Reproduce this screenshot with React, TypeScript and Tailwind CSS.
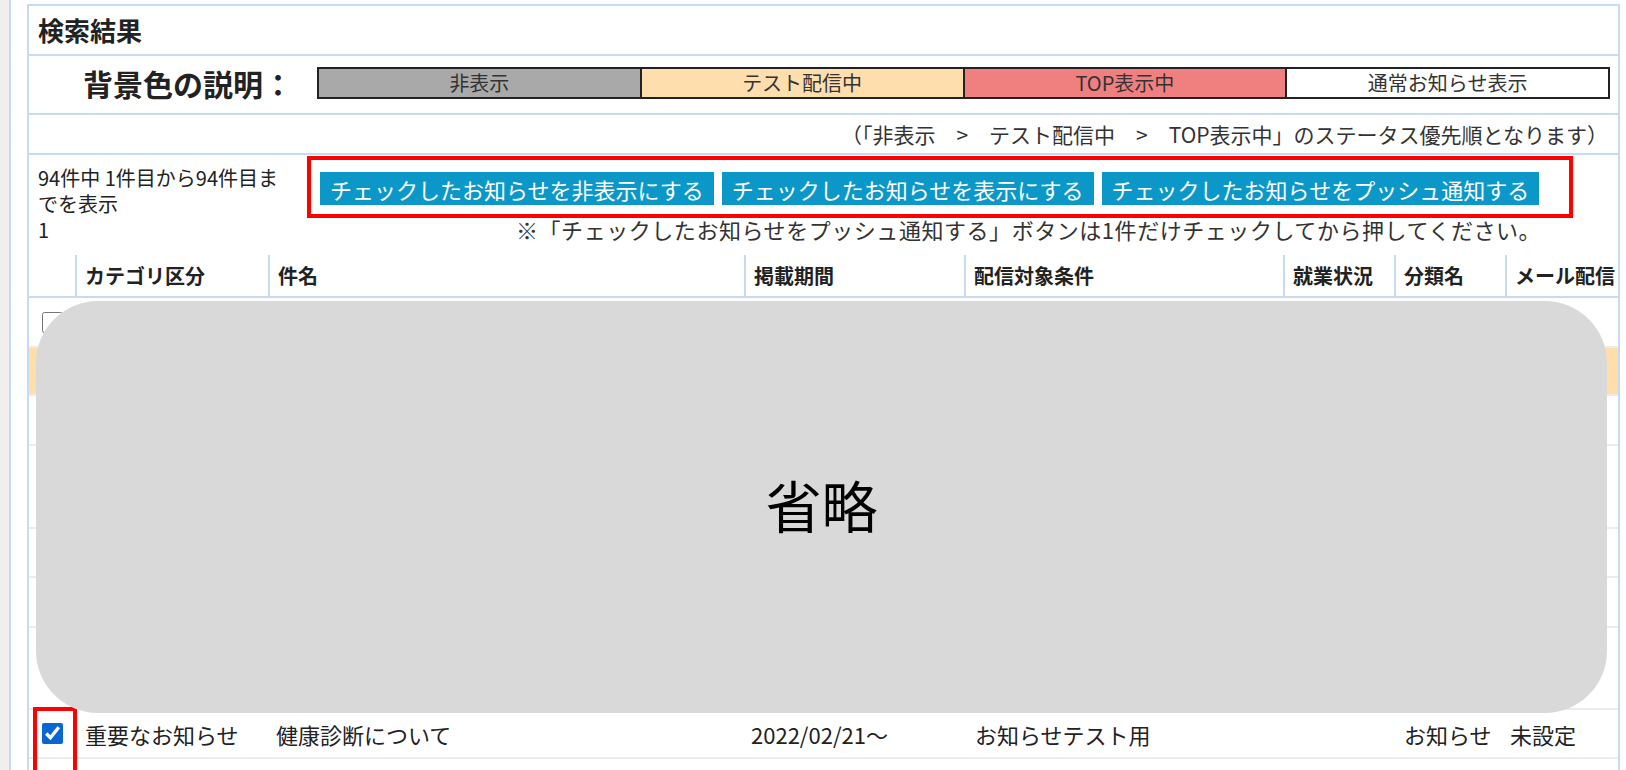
const cols = [
  'grid-cols-[46px_193px_476px_220px_319px_111px_111px_113px]',
]

const headers = ['', 'カテゴリ区分', '件名', '掲載期間', '配信対象条件', '就業状況', '分類名', 'メール配信']

const bodyPad = ['pl-[13px]', 'pl-[10px]', 'pl-[8px]', 'pl-[7px]', 'pl-[11px]', 'pl-[9px]', 'pl-[10px]', 'pl-[5px]']

type Row = {
  h: string
  bg?: string
  checked?: boolean
  cells: string[]
}

const rows: Row[] = [
  { h: 'h-[50px]', cells: ['重要なお知らせ', '年末年始の休業について', '2022/12/01〜', 'お知らせテスト用', '', 'お知らせ', '未設定'] },
  { h: 'h-[48px]', bg: 'bg-[#ffdeac]', cells: ['一般', 'テスト配信のお知らせ', '2022/11/15〜', '全員', '', 'お知らせ', '未設定'] },
  { h: 'h-[50px]', cells: ['一般', 'システムメンテナンスについて', '2022/10/01〜', '全員', '', 'お知らせ', '未設定'] },
  { h: 'h-[83px]', cells: ['重要なお知らせ', '給与明細の配信について', '2022/08/01〜', 'お知らせテスト用', '', 'お知らせ', '未設定'] },
  { h: 'h-[49px]', cells: ['一般', 'アンケートのお願い', '2022/06/10〜', '全員', '', 'お知らせ', '未設定'] },
  { h: 'h-[50px]', cells: ['一般', '新サービス開始のご案内', '2022/04/01〜', '全員', '', 'お知らせ', '未設定'] },
  { h: 'h-[82px]', cells: ['重要なお知らせ', '個人情報の取り扱いについて', '2022/03/01〜', 'お知らせテスト用', '', 'お知らせ', '未設定'] },
  { h: 'h-[49px]', checked: true, cells: ['重要なお知らせ', '健康診断について', '2022/02/21〜', 'お知らせテスト用', '', 'お知らせ', '未設定'] },
]

function LegendCell({ label, bg, last }: { label: string; bg: string; last?: boolean }) {
  return (
    <div className={`flex-1 flex items-center justify-center ${bg} ${last ? '' : 'border-r-2 border-[#222]'}`}>
      {label}
    </div>
  )
}

export default function App() {
  return (
    <div className="relative flex h-[770px] overflow-hidden bg-white text-[#222] font-['Noto_Sans_CJK_JP',sans-serif]">
      <div className="w-[11px] shrink-0 bg-[#f1efeb] border-r-2 border-[#c6dbf3]" />
      <div className="flex-1 pl-[16px] pr-[6px] pt-[4px]">
        <div className="border-2 border-b-0 border-[#c6dbf3] h-[780px]">
          {/* title */}
          <div className="h-[50px] border-b-2 border-[#c6dbf3] flex items-center pl-[9px] text-[26px] font-bold leading-none">
            検索結果
          </div>

          {/* legend */}
          <div className="h-[59px] border-b-2 border-[#c6dbf3] flex items-center pb-[4px] pl-[54px]">
            <div className="text-[30px] font-bold leading-none w-[234px]">背景色の説明：</div>
            <div className="flex h-[32px] w-[1293px] border-2 border-[#222] text-[20px] leading-none text-[#333]">
              <LegendCell label="非表示" bg="bg-[#a9a9a9]" />
              <LegendCell label="テスト配信中" bg="bg-[#ffdead]" />
              <LegendCell label="TOP表示中" bg="bg-[#f08080]" />
              <LegendCell label="通常お知らせ表示" bg="bg-white" last />
            </div>
          </div>

          {/* priority note */}
          <div className="h-[40px] border-b-2 border-[#c6dbf3] flex items-center justify-end pr-[10px] text-[21px] leading-none text-[#333]">
            （「非表示　&gt;　テスト配信中　&gt;　TOP表示中」のステータス優先順となります）
          </div>

          {/* info + actions */}
          <div className="h-[100px] flex">
            <div className="w-[278px] shrink-0 pl-[9px] pr-[20px] pt-[10px] text-[20px] leading-[26px]">
              94件中 1件目から94件目までを表示
              <br />1
            </div>
            <div className="flex flex-col">
              <div className="mt-[1px] border-4 border-[#ff0000] pl-[9px] pt-[12px] pb-[9px] pr-[30px] flex gap-[8px]">
                {['チェックしたお知らせを非表示にする', 'チェックしたお知らせを表示にする', 'チェックしたお知らせをプッシュ通知する'].map((b) => (
                  <button key={b} className="h-[33px] px-[10px] bg-[#0b98c9] text-white text-[22px] leading-none">
                    {b}
                  </button>
                ))}
              </div>
              <div className="ml-[209px] text-[22px] leading-[22px] tracking-[0.55px] text-[#333]">
                ※「チェックしたお知らせをプッシュ通知する」ボタンは1件だけチェックしてから押してください。
              </div>
            </div>
          </div>

          {/* table header */}
          <div className={`grid ${cols[0]} h-[43px] border-b-2 border-[#c6dbf3] text-[20px] font-bold leading-none`}>
            {headers.map((h, i) => (
              <div key={i} className={`flex items-center pl-[8px] ${i > 0 ? 'border-l-2 border-[#c6dbf3]' : ''}`}>
                {h}
              </div>
            ))}
          </div>

          {/* rows */}
          {rows.map((r, ri) => (
            <div key={ri} className={`grid ${cols[0]} ${r.h} ${r.bg ?? ''} border-b-2 border-[#ececec] text-[22px] leading-none`}>
              <div className={`relative flex items-center ${bodyPad[0]}`}>
                <input
                  type="checkbox"
                  defaultChecked={r.checked}
                  className="w-[21px] h-[21px] m-0 accent-[#0a66d4]"
                />
                {r.checked && (
                  <div className="absolute left-[4px] top-[-3px] w-[44px] h-[70px] border-4 border-[#ff0000]" />
                )}
              </div>
              {r.cells.map((c, ci) => (
                <div key={ci} className={`flex items-center whitespace-nowrap ${bodyPad[ci + 1]} ${ri === 0 ? 'pb-[12px]' : ''}`}>
                  {c}
                </div>
              ))}
            </div>
          ))}
        </div>
      </div>

      {/* omitted rows cover */}
      <div className="absolute left-[36px] top-[301px] w-[1571px] h-[412px] rounded-[62px] bg-[#d9d9d9] flex items-center justify-center pb-[6px] text-[56px] leading-none text-black">
        省略
      </div>
    </div>
  )
}
